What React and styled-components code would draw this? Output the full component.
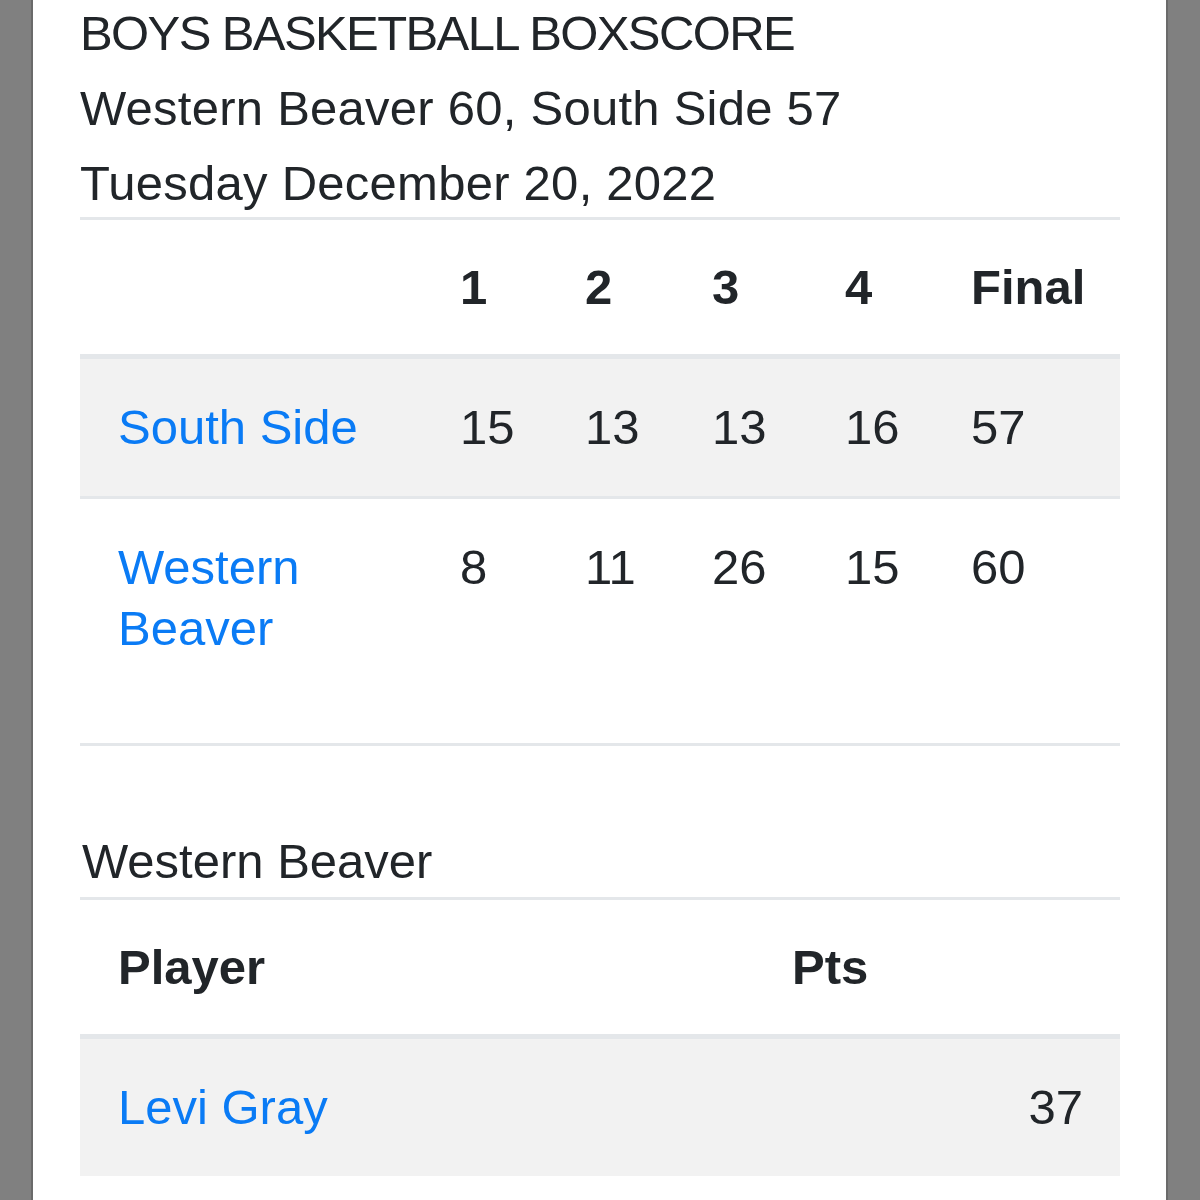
import styled, { createGlobalStyle } from "styled-components";

const GlobalStyle = createGlobalStyle`
  body {
    margin: 0;
    background: #808080;
    font-family: "Liberation Sans", Arial, sans-serif;
    color: #212529;
  }
`;

const Page = styled.div`
  height: 1200px;
  overflow: hidden;
  padding-left: 31px;
`;

const Sheet = styled.div`
  display: flow-root;
  box-sizing: border-box;
  width: 1137px;
  height: 1200px;
  background: #fff;
  border-left: 2px solid #6a6a6a;
  border-right: 2px solid #6a6a6a;
  padding: 0 46px 0 47px;
`;

const Title = styled.div`
  margin: -4px 0 0;
`;

const TitleLine = styled.div`
  font-size: 49px;
  line-height: 75px;
  height: ${({ $h }) => $h || 75}px;
  letter-spacing: ${({ $caps }) => ($caps ? "-1.6px" : "0.25px")};
  white-space: nowrap;
`;

const SectionHeading = styled.div`
  margin: 79px 0 0 2px;
  font-size: 49px;
  line-height: 72px;
  white-space: nowrap;
`;

const Table = styled.table`
  width: 1040px;
  border-collapse: collapse;
  table-layout: fixed;
  font-size: 49px;
  line-height: 61px;
  border-bottom: ${({ $closed }) => ($closed ? "3px solid #e4e7ea" : "none")};
`;

const Th = styled.th`
  text-align: left;
  font-weight: 700;
  padding: 37px 38px 36px;
  border-top: 3px solid #e4e7ea;
  border-bottom: 5px solid #e4e7ea;
  white-space: nowrap;
`;

const Row = styled.tr`
  background: ${({ $striped }) => ($striped ? "#f2f2f2" : "#fff")};
`;

const Td = styled.td`
  vertical-align: top;
  padding: 38px ${({ $right }) => ($right ? "37px" : "38px")}
    ${({ $tall }) => ($tall ? "84px" : "38px")} 38px;
  text-align: ${({ $right }) => ($right ? "right" : "left")};
  border-top: 3px solid #e4e7ea;
`;

const TeamLink = styled.a`
  color: #0a7bf5;
  text-decoration: none;
`;

const quarters = ["1", "2", "3", "4", "Final"];
const widths = [342, 125, 127, 133, 126, 187];

const teams = [
  { name: "South Side", scores: [15, 13, 13, 16, 57] },
  { name: "Western Beaver", scores: [8, 11, 26, 15, 60], tall: true },
];

export default function App() {
  return (
    <Page>
      <GlobalStyle />
      <Sheet>
        <Title>
          <TitleLine $caps>BOYS BASKETBALL BOXSCORE</TitleLine>
          <TitleLine>Western Beaver 60, South Side 57</TitleLine>
          <TitleLine $h={71}>Tuesday December 20, 2022</TitleLine>
        </Title>

        <Table $closed>
          <colgroup>
            {widths.map((w, i) => (
              <col key={i} style={{ width: w }} />
            ))}
          </colgroup>
          <thead>
            <tr>
              <Th />
              {quarters.map((q) => (
                <Th key={q}>{q}</Th>
              ))}
            </tr>
          </thead>
          <tbody>
            {teams.map((t, i) => (
              <Row key={t.name} $striped={i % 2 === 0}>
                <Td $tall={t.tall}>
                  <TeamLink href="#">{t.name}</TeamLink>
                </Td>
                {t.scores.map((s, j) => (
                  <Td key={j} $tall={t.tall}>
                    {s}
                  </Td>
                ))}
              </Row>
            ))}
          </tbody>
        </Table>

        <SectionHeading>Western Beaver</SectionHeading>
        <Table>
          <colgroup>
            <col style={{ width: 674 }} />
            <col style={{ width: 366 }} />
          </colgroup>
          <thead>
            <tr>
              <Th>Player</Th>
              <Th>Pts</Th>
            </tr>
          </thead>
          <tbody>
            <Row $striped>
              <Td>
                <TeamLink href="#">Levi Gray</TeamLink>
              </Td>
              <Td $right>37</Td>
            </Row>
          </tbody>
        </Table>
      </Sheet>
    </Page>
  );
}
